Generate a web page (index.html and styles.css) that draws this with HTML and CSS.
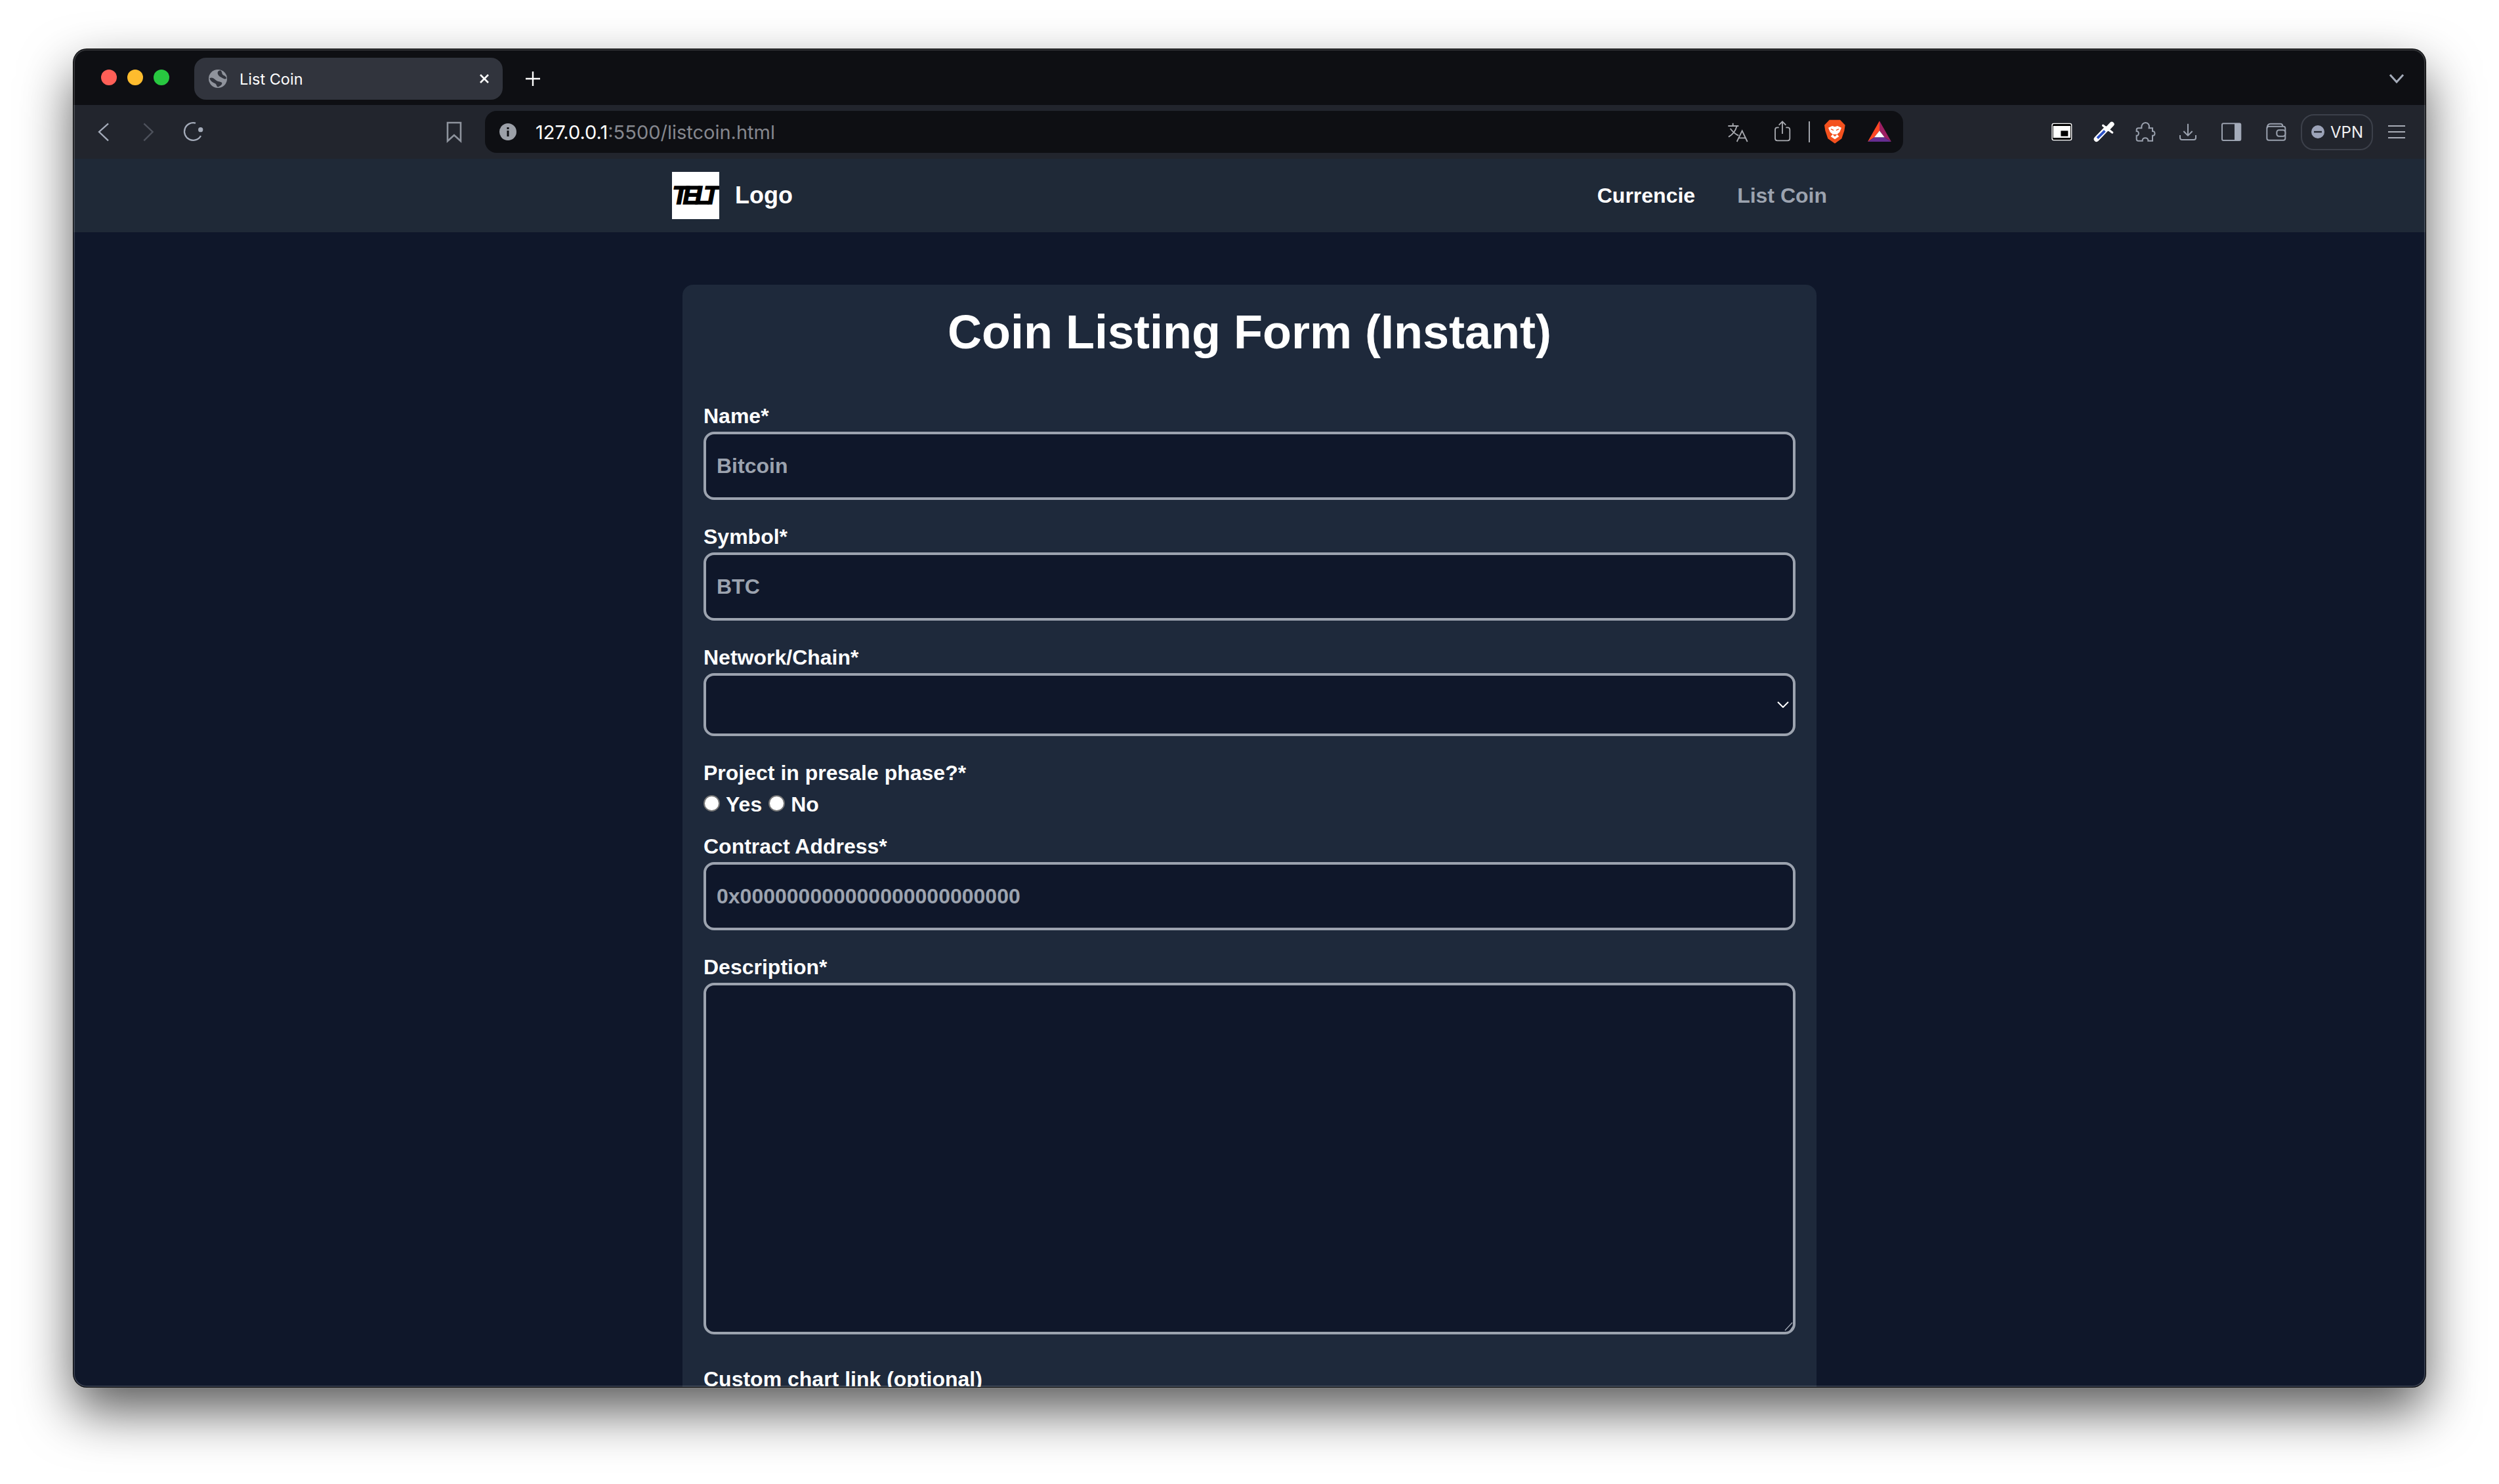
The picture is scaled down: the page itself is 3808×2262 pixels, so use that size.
FILE: index.html
```html
<!DOCTYPE html>
<html lang="en">
<head>
    <meta charset="UTF-8">
    <meta name="viewport" content="width=device-width, initial-scale=1.0">
    <title>List Coin</title>
    <link rel="stylesheet" href="styles.css">
</head>
<body>
    <div class="window">
        <div class="tabstrip">
            <div class="lights">
                <span class="light red"></span>
                <span class="light yellow"></span>
                <span class="light green"></span>
            </div>
            <div class="tab">
                <svg class="favicon" viewBox="684 138 84 84">
                    <circle cx="726" cy="180" r="42" fill="#8f939c"/>
                    <path d="M738 142C748 150 742 160 752 164C760 167 764 172 766 178C758 186 748 178 738 172C730 168 722 158 726 148C729 144 733 142 738 142Z" fill="#31343d"/>
                    <path d="M688 178C698 172 708 178 716 186C724 194 738 192 744 198C748 204 738 214 726 218C716 210 722 204 710 200C700 196 692 190 688 178Z" fill="#31343d"/>
                </svg>
                <span class="tab-title">List Coin</span>
                <svg class="tab-close" viewBox="0 0 16 16"><path d="M2 2L14 14M14 2L2 14"/></svg>
            </div>
            <svg class="new-tab" viewBox="0 0 24 24"><path d="M12 1V23M1 12H23"/></svg>
            <svg class="tab-list" viewBox="0 0 24 16"><path d="M2 2L12 13L22 2"/></svg>
        </div>

        <div class="toolbar">
            <div class="tool"><svg class="icon" viewBox="144 360 120 120"><path class="line" d="M225 382L183 420L225 460"/></svg></div>
            <div class="tool"><svg class="icon" viewBox="348 360 120 120"><path class="line dim" d="M388 382L428 420L388 460"/></svg></div>
            <div class="tool"><svg class="icon" viewBox="550 360 120 120">
                <path class="line" d="M646 438A40 40 0 1 1 622 380"/>
                <circle cx="645" cy="410" r="11" fill="#a4abb9"/>
            </svg></div>
            <div class="tool bookmark"><svg class="icon" viewBox="0 0 40 40"><path class="line thin" d="M10 6H30V34L20 25L10 34Z"/></svg></div>

            <div class="urlbar">
                <svg class="info" viewBox="0 0 26 26">
                    <circle cx="13" cy="13" r="13" fill="#9ca0a8"/>
                    <rect x="11.5" y="11" width="3" height="9" fill="#0e0f13"/>
                    <rect x="11.5" y="6" width="3" height="3" fill="#0e0f13"/>
                </svg>
                <div class="url"><span class="url-host">127.0.0.1</span>:5500/listcoin.html</div>
                <svg class="url-icon" viewBox="12 33 144 144">
                    <path class="glyph" d="M40 78H88M62 65V78M80 78C74 100 60 118 42 128M50 90C62 106 74 116 88 122M80 150L104 100L128 150M88 133H120"/>
                </svg>
                <svg class="url-icon" viewBox="216 33 144 144">
                    <path class="glyph" d="M272 85H265Q255 85 255 95V135Q255 145 265 145H312Q322 145 322 135V95Q322 85 312 85H304M288 114V60M272 74L288 58L304 74"/>
                </svg>
                <span class="url-divider"></span>
                <svg class="url-icon brave" viewBox="456 33 144 144">
                    <path d="M503 50H552L575 74L571 100L559 136L528 158L496 136L484 100L480 74Z" fill="#f4511e"/>
                    <path d="M498 86L516 78L528 82L540 78L558 86L550 106L538 116L547 126L528 139L509 126L518 116L506 106Z" fill="#fff"/>
                    <path d="M510 92L522 98M546 92L534 98M522 118H534L528 124Z" stroke="#f4511e" stroke-width="4" fill="#f4511e"/>
                </svg>
                <svg class="url-icon" viewBox="660 33 144 144">
                    <polygon points="732,55 678,150 708,130 732,100" fill="#ff4724"/>
                    <polygon points="732,55 786,150 755,130 732,100" fill="#9e1f63"/>
                    <polygon points="678,150 786,150 755,130 708,130" fill="#662d91"/>
                    <polygon points="732,100 755,130 708,130" fill="#fff"/>
                </svg>
            </div>

            <div class="tools-right">
                <div class="tool narrow"><svg class="icon" viewBox="37 45 120 120">
                    <rect x="50" y="65" width="93" height="80" rx="9" fill="#fff"/>
                    <rect x="54" y="69" width="85" height="72" rx="6" fill="#000"/>
                    <rect x="57" y="78" width="79" height="54" fill="#fff"/>
                    <rect x="92" y="100" width="33" height="25" fill="#000"/>
                </svg></div>
                <div class="tool narrow"><svg class="icon" viewBox="228 45 120 120">
                    <path d="M254 138L298 92" stroke="#fff" stroke-width="24" stroke-linecap="round"/>
                    <path d="M258 134L292 100" stroke="#2a4fc4" stroke-width="11"/>
                    <path d="M284 76L326 108" stroke="#fff" stroke-width="10" stroke-linecap="round"/>
                    <path d="M305 90L324 70" stroke="#fff" stroke-width="22" stroke-linecap="round"/>
                </svg></div>
                <div class="tool narrow"><svg class="icon" viewBox="420 45 120 120">
                    <path class="glyph blue" d="M445 88H460C458 72 468 63 478 63C490 63 498 74 494 88H510V102C524 100 524 125 510 122V146H490C492 128 462 128 464 146H445Q437 146 437 138V122C450 124 450 100 437 102V96Q437 88 445 88Z"/>
                </svg></div>
                <div class="tool narrow"><svg class="icon" viewBox="612 45 120 120">
                    <path class="glyph blue" d="M672 68V122M652 102L672 122L692 102M636 120V132Q636 141 645 141H699Q708 141 708 132V120"/>
                </svg></div>
                <div class="tool medium"><svg class="icon" viewBox="810 45 120 120">
                    <rect class="glyph blue" x="828" y="67" width="85" height="77" rx="6"/>
                    <rect x="885" y="67" width="28" height="77" fill="#a4abb9"/>
                </svg></div>
                <div class="tool medium"><svg class="icon" viewBox="1014 45 120 120">
                    <rect class="glyph blue" x="1033" y="80" width="84" height="63" rx="9"/>
                    <path class="glyph blue" d="M1034 88Q1034 68 1050 68H1095Q1105 68 1105 80"/>
                    <rect class="glyph blue slot" x="1078" y="97" width="39" height="28" rx="10"/>
                </svg></div>
                <div class="vpn">
                    <svg class="vpn-icon" viewBox="0 0 20 20">
                        <circle cx="10" cy="10" r="10" fill="#9ca3b8"/>
                        <rect x="4" y="8.8" width="12" height="2.4" fill="#22252d"/>
                    </svg>
                    <span>VPN</span>
                </div>
                <div class="menu">
                    <span class="menu-line"></span>
                    <span class="menu-line"></span>
                    <span class="menu-line"></span>
                </div>
            </div>
        </div>

        <div class="page">
            <nav class="nav">
                <div class="brand">
                    <div class="brand-mark"><span>TELT</span></div>
                    <span class="brand-name">Logo</span>
                </div>
                <div class="nav-links">
                    <a class="nav-link active">Currencie</a>
                    <a class="nav-link">List Coin</a>
                </div>
            </nav>

            <main class="card">
                <h1 class="card-title">Coin Listing Form (Instant)</h1>
                <form>
                    <div class="field">
                        <label class="field-label" for="name">Name*</label>
                        <input class="control" type="text" id="name" placeholder="Bitcoin">
                    </div>
                    <div class="field">
                        <label class="field-label" for="symbol">Symbol*</label>
                        <input class="control" type="text" id="symbol" placeholder="BTC">
                    </div>
                    <div class="field select-wrap">
                        <label class="field-label" for="network">Network/Chain*</label>
                        <select class="control control-select" id="network"></select>
                        <svg class="select-arrow" viewBox="0 0 18 10"><path d="M1 1L9 9L17 1"/></svg>
                    </div>
                    <div class="field field-radio">
                        <div class="field-label">Project in presale phase?*</div>
                        <div class="radio-row">
                            <label class="radio-opt"><input class="radio" type="radio" name="presale">Yes</label>
                            <label class="radio-opt"><input class="radio" type="radio" name="presale">No</label>
                        </div>
                    </div>
                    <div class="field">
                        <label class="field-label" for="contract">Contract Address*</label>
                        <input class="control" type="text" id="contract" placeholder="0x000000000000000000000000">
                    </div>
                    <div class="field field-desc">
                        <label class="field-label" for="description">Description*</label>
                        <textarea class="control control-area" id="description"></textarea>
                        <svg class="grip" viewBox="0 0 14 14"><path d="M1 13L12 1M9 13L13 7"/></svg>
                    </div>
                    <div class="field">
                        <label class="field-label" for="chart">Custom chart link (optional)</label>
                        <input class="control" type="text" id="chart">
                    </div>
                </form>
            </main>
        </div>
    </div>
</body>
</html>
```

FILE: styles.css
```css
* {
    box-sizing: border-box;
}
html, body {
    height: 100%;
}
body {
    margin: 0;
    padding: 75px 112px 0;
    background-color: #fff;
    overflow: hidden;
    font-family: "Liberation Sans", Arial, sans-serif;
}

/* browser window */
.window {
    position: relative;
    width: 3584px;
    height: 2039px;
    display: flex;
    flex-direction: column;
    border-radius: 20px;
    overflow: hidden;
    background-color: #0f172a;
    box-shadow: 0 0 0 1px #000, 0 36px 80px rgba(0, 0, 0, 0.65);
}
.window::after {
    content: "";
    position: absolute;
    inset: 0;
    border-radius: 20px;
    box-shadow: inset 0 0 0 2px rgba(255, 255, 255, 0.16);
    pointer-events: none;
}
.tabstrip {
    height: 85px;
    flex: none;
    display: flex;
    align-items: center;
    padding-top: 5px;
    background-color: #0e0f13;
    font-family: Inter, "Liberation Sans", sans-serif;
}
.lights {
    width: 184px;
    display: flex;
    gap: 16px;
    padding: 0 0 4px 42px;
}
.light {
    width: 24px;
    height: 24px;
    border-radius: 50%;
}
.red { background-color: #ff5f57; }
.yellow { background-color: #febc2e; }
.green { background-color: #28c840; }
.tab {
    width: 470px;
    height: 64px;
    display: flex;
    align-items: center;
    padding: 0 20px 0 22px;
    border-radius: 18px;
    background-color: #31343d;
}
.favicon {
    width: 28px;
    height: 28px;
    margin-right: 19px;
}
.tab-title {
    flex: 1;
    font-size: 23.5px;
    color: #fff;
}
.tab-close {
    width: 16px;
    height: 16px;
    fill: none;
    stroke: #fff;
    stroke-width: 2.6;
}
.new-tab {
    width: 24px;
    height: 24px;
    margin-left: 34px;
    fill: none;
    stroke: #fff;
    stroke-width: 2.4;
}
.tab-list {
    width: 24px;
    height: 16px;
    margin-left: auto;
    margin-right: 32px;
    fill: none;
    stroke: #a4abb9;
    stroke-width: 3;
}

/* toolbar */
.toolbar {
    height: 82px;
    flex: none;
    display: flex;
    align-items: center;
    padding-left: 12px;
    background-color: #22252d;
    font-family: Inter, "Liberation Sans", sans-serif;
}
.tool {
    width: 68px;
    height: 64px;
    flex: none;
    display: flex;
    align-items: center;
    justify-content: center;
}
.tool.bookmark {
    margin-left: 330px;
}
.tool.narrow {
    width: 64px;
}
.icon {
    width: 40px;
    height: 40px;
    overflow: visible;
}
.line {
    fill: none;
    stroke: #a4abb9;
    stroke-width: 7;
}
.line.dim {
    stroke: #4e525c;
}
.line.thin {
    stroke: #8e939d;
    stroke-width: 2.6;
}
.glyph {
    fill: none;
    stroke: #a9abb1;
    stroke-width: 5.5;
}
.glyph.blue {
    stroke: #9aa1ae;
    stroke-width: 6;
}
.glyph.slot {
    fill: #22252d;
}
.urlbar {
    width: 2161px;
    height: 64px;
    flex: none;
    margin-left: 13px;
    display: flex;
    align-items: center;
    padding: 0 12px 0 22px;
    border-radius: 18px;
    background-color: #0e0f13;
}
.info {
    width: 26px;
    height: 26px;
    margin-right: 29px;
}
.url {
    flex: 1;
    font-size: 29px;
    color: #85878e;
}
.url-host {
    color: #fff;
}
.url-icon {
    width: 48px;
    height: 48px;
    margin-left: 20px;
}
.url-divider {
    width: 2px;
    height: 32px;
    margin: 0 14px 0 16px;
    background-color: #a0a3aa;
}
.url-divider + .url-icon {
    margin-left: 0;
}
.tools-right {
    flex: none;
    margin-left: 210px;
    display: flex;
    align-items: center;
}
.vpn {
    width: 110px;
    height: 55px;
    margin-left: 4px;
    display: flex;
    align-items: center;
    gap: 9px;
    padding-left: 14px;
    border: 2px solid #3c404a;
    border-radius: 20px;
    font-size: 24px;
    color: #f0f0f2;
}
.vpn-icon {
    width: 20px;
    height: 20px;
}
.menu {
    width: 26px;
    margin-left: 23px;
    display: flex;
    flex-direction: column;
    gap: 7px;
}
.menu-line {
    height: 2px;
    background-color: #a9adb7;
}

/* page */
.page {
    flex: 1;
    min-height: 0;
    overflow: hidden;
}
.nav {
    height: 112px;
    padding: 0 912px;
    display: flex;
    align-items: center;
    justify-content: space-between;
    background-color: #1f2937;
}
.brand {
    display: flex;
    align-items: center;
    gap: 24px;
}
.brand-mark {
    width: 72px;
    height: 72px;
    display: flex;
    align-items: center;
    justify-content: center;
    overflow: hidden;
    background-color: #fff;
    color: #000;
    font-size: 38px;
    font-weight: bold;
    font-style: italic;
    letter-spacing: -7px;
    -webkit-text-stroke: 1.5px #000;
}
.brand-mark span {
    padding-right: 7px;
}
.brand-name {
    font-size: 36px;
    font-weight: bold;
    color: #fff;
}
.nav-links {
    display: flex;
    gap: 64px;
}
.nav-link {
    font-size: 32px;
    font-weight: bold;
    color: #9ca3af;
}
.nav-link.active {
    color: #fff;
}
.card {
    width: 1728px;
    margin: 80px auto 0;
    padding: 32px;
    border-radius: 16px;
    background-color: #1e293b;
}
.card-title {
    margin: 0 0 64px;
    font-size: 72px;
    line-height: 80px;
    font-weight: bold;
    text-align: center;
    color: #fff;
}
.field {
    position: relative;
    margin-bottom: 32px;
}
.field-radio {
    margin-bottom: 16px;
}
.field-desc {
    margin-bottom: 44px;
}
.field-label {
    display: block;
    font-size: 32px;
    line-height: 48px;
    font-weight: bold;
    color: #fff;
}
.control {
    display: block;
    width: 100%;
    height: 104px;
    padding: 0 16px;
    border: 4px solid #9ca3af;
    border-radius: 16px;
    background-color: #0f172a;
    font-family: inherit;
    font-size: 32px;
    font-weight: bold;
    color: #fff;
    outline: none;
}
.control::placeholder {
    color: #9ca3af;
    opacity: 1;
}
.control-select {
    height: 96px;
    appearance: none;
}
.control-area {
    height: 536px;
    resize: none;
}
.select-arrow {
    position: absolute;
    right: 10px;
    bottom: 43px;
    width: 18px;
    height: 10px;
    fill: none;
    stroke: #fff;
    stroke-width: 2;
}
.grip {
    position: absolute;
    right: 3px;
    bottom: 5px;
    width: 14px;
    height: 14px;
    fill: none;
    stroke: #9ca3af;
    stroke-width: 1.4;
}
.radio-row {
    display: flex;
    height: 48px;
    align-items: center;
    gap: 10px;
    font-size: 32px;
    font-weight: bold;
    color: #fff;
}
.radio-opt {
    display: flex;
    align-items: center;
    gap: 9px;
}
.radio {
    appearance: none;
    width: 25px;
    height: 25px;
    margin: 0 0 4px;
    border: 2px solid #767676;
    border-radius: 50%;
    background-color: #fff;
}
```
